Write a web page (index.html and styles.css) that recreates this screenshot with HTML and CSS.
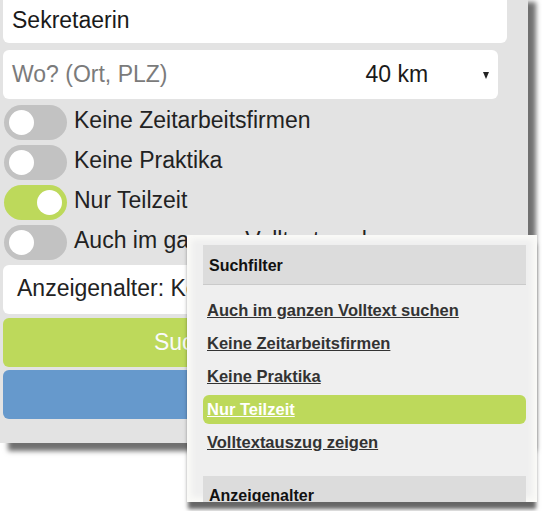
FILE: index.html
```html
<!DOCTYPE html>
<html lang="de">
<head>
<meta charset="utf-8">
<title>Suche</title>
<link rel="stylesheet" href="styles.css">
</head>
<body>
<div class="page">
<div class="panel">
  <div class="field field-what">Sekretaerin</div>
  <div class="field field-where">
    <span class="placeholder">Wo? (Ort, PLZ)</span>
    <span class="radius">40 km</span>
    <span class="arrow"></span>
  </div>
  <div class="toggles">
    <div class="toggle-row"><span class="toggle"><span class="knob"></span></span><span class="toggle-label">Keine Zeitarbeitsfirmen</span></div>
    <div class="toggle-row"><span class="toggle"><span class="knob"></span></span><span class="toggle-label">Keine Praktika</span></div>
    <div class="toggle-row"><span class="toggle on"><span class="knob"></span></span><span class="toggle-label">Nur Teilzeit</span></div>
    <div class="toggle-row"><span class="toggle"><span class="knob"></span></span><span class="toggle-label">Auch im ganzen Volltext suchen</span></div>
  </div>
  <div class="field field-age">Anzeigenalter: Keine Begrenzung</div>
  <div class="btn btn-green">Suche starten (123)</div>
  <div class="btn btn-blue">Volltextsuche</div>
</div>
</div>

<div class="popup">
  <div class="popup-head">Suchfilter</div>
  <ul class="popup-list">
    <li><a href="#">Auch im ganzen Volltext suchen</a></li>
    <li><a href="#">Keine Zeitarbeitsfirmen</a></li>
    <li><a href="#">Keine Praktika</a></li>
    <li class="active"><a href="#">Nur Teilzeit</a></li>
    <li><a href="#">Volltextauszug zeigen</a></li>
  </ul>
  <div class="popup-head popup-head-2">Anzeigenalter</div>
</div>
</body>
</html>
```

FILE: styles.css
```css
html {
  background: #ffffff;
}

body {
  margin: 0;
  padding: 0;
  overflow: hidden;
  height: 511px;
  font-family: "Liberation Sans", Arial, sans-serif;
}

.page {
  padding: 0 14px 20px 0;
}

.panel {
  position: relative;
  box-sizing: border-box;
  width: 528px;
  margin-top: -6px;
  padding: 0 21px 24px 3px;
  background: #e3e3e3;
  box-shadow: 8px 8px 5px #707070;
  color: #222;
  font-size: 23px;
}

.field {
  box-sizing: border-box;
  height: 49px;
  background: #fff;
  border-radius: 6px;
  display: flex;
  align-items: center;
  white-space: nowrap;
  overflow: hidden;
}

.field-what {
  padding: 3px 0 0 9px;
  color: #1a1a1a;
}

.field-where {
  width: 495px;
  margin-top: 7px;
  padding-left: 9px;
}

.placeholder {
  color: #7b7b7b;
}

.radius {
  margin-left: 198px;
  color: #1a1a1a;
}

.arrow {
  margin-left: 55px;
  margin-top: 2px;
  width: 0;
  height: 0;
  border-left: 3.5px solid transparent;
  border-right: 3.5px solid transparent;
  border-top: 7px solid #222;
}

.toggles {
  margin-top: 6px;
  display: flex;
  flex-direction: column;
  gap: 5px;
}

.toggle-row {
  height: 35px;
  display: flex;
  align-items: center;
  white-space: nowrap;
}

.toggle {
  box-sizing: border-box;
  width: 63px;
  height: 35px;
  margin-left: 1px;
  padding: 5px;
  border-radius: 18px;
  background: #c2c2c2;
  display: flex;
  flex-shrink: 0;
}

.toggle.on {
  background: #bdd95b;
  justify-content: flex-end;
}

.knob {
  width: 25px;
  height: 25px;
  border-radius: 50%;
  background: #fff;
}

.toggle-label {
  margin-left: 7px;
  margin-top: -4px;
}

.field-age {
  margin-top: 5px;
  padding-left: 14px;
  padding-bottom: 3px;
}

.btn {
  height: 49px;
  border-radius: 6px;
  color: #fafafa;
  display: flex;
  align-items: center;
  justify-content: center;
  white-space: nowrap;
  overflow: hidden;
}

.btn-green {
  margin-top: 4px;
  background: #bdd95b;
}

.btn-blue {
  margin-top: 3px;
  background: #6699cc;
}

.popup {
  position: absolute;
  left: 187px;
  top: 235px;
  width: 350px;
  height: 267px;
  box-sizing: border-box;
  padding: 10px 11px 0 16px;
  background: #efefef;
  box-shadow: inset 0 0 6px 4px #fbfbf8, 0 8px 4px -1px rgba(0, 0, 0, 0.6);
  overflow: hidden;
}

.popup-head {
  box-sizing: border-box;
  height: 40px;
  padding: 3px 0 0 6px;
  background: #dcdcdc;
  border-bottom: 1px solid #cacaca;
  font-weight: bold;
  font-size: 16px;
  color: #111;
  display: flex;
  align-items: center;
}

.popup-head-2 {
  margin-top: 17px;
  align-items: flex-end;
  padding-bottom: 0;
  height: 30px;
}

.popup-list {
  list-style: none;
  margin: 9px 0 0;
  padding: 0;
}

.popup-list li {
  height: 33px;
  display: flex;
  align-items: center;
}

.popup-list a {
  margin-left: 4px;
  font-weight: bold;
  font-size: 16.5px;
  color: #333;
  text-decoration: underline;
}

.popup-list li.active {
  height: 29px;
  margin: 2px 0;
  border-radius: 6px;
  background: #bdd95b;
}

.popup-list li.active a {
  color: #fff;
}
```
